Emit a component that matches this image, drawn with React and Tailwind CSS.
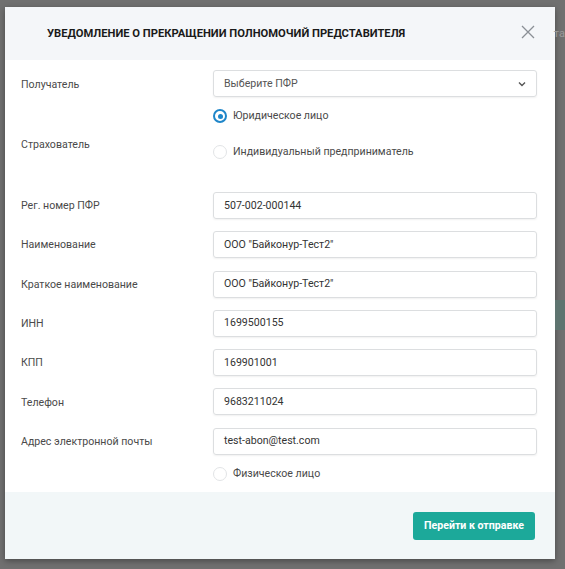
import React from "react";

const fields = [
  ["Рег. номер ПФР", "507-002-000144"],
  ["Наименование", "ООО \"Байконур-Тест2\""],
  ["Краткое наименование", "ООО \"Байконур-Тест2\""],
  ["ИНН", "1699500155"],
  ["КПП", "169901001"],
  ["Телефон", "9683211024"],
  ["Адрес электронной почты", "test-abon@test.com"],
];

function Radio({ checked, label }) {
  return (
    <div className="flex items-center h-[20px]">
      {checked ? (
        <span className="w-[14px] h-[14px] rounded-full border-[2.5px] border-[#1f86c9] flex items-center justify-center">
          <span className="w-[5px] h-[5px] rounded-full bg-[#1f86c9]" />
        </span>
      ) : (
        <span className="w-[14px] h-[14px] rounded-full border border-[#e2e4e6] bg-white" />
      )}
      <span className="ml-[6px] text-[10.6px] text-[#4a4a4a]">{label}</span>
    </div>
  );
}

export default function App() {
  return (
    <div
      className="w-[565px] h-[569px] bg-[#707070] relative overflow-hidden pt-[7px] pl-[5px]"
      style={{ fontFamily: "Roboto, 'Noto Sans', sans-serif" }}
    >
      <div className="absolute right-0 top-[26px] text-[11px] text-[#9a9a9a]">та</div>
      <div className="absolute right-0 top-[300px] w-[10px] h-[30px] bg-[#5e7470]" />
      <div className="w-[550px] h-[552px] bg-white flex flex-col shadow-[0_2px_6px_rgba(0,0,0,0.35)]">
        <div className="h-[53px] bg-[#f4f6f9] flex items-center pl-[42px] pr-[20px] shrink-0">
          <div className="flex-1 text-[11.2px] font-bold text-[#1a1a1a] pt-[1px]">
            УВЕДОМЛЕНИЕ О ПРЕКРАЩЕНИИ ПОЛНОМОЧИЙ ПРЕДСТАВИТЕЛЯ
          </div>
          <svg width="14" height="14" viewBox="0 0 14 14" className="mb-[4px]">
            <path d="M1 1L13 13M13 1L1 13" stroke="#8a8f96" strokeWidth="1.3" />
          </svg>
        </div>

        <div className="flex-1 pt-[10px] pl-[16px] pr-[18px] flex flex-col">
          <div className="flex items-center h-[27px]">
            <div className="w-[192px] text-[10.6px] text-[#4a4a4a] pt-[2px]">Получатель</div>
            <div className="flex-1 h-full border border-[#dcdee0] rounded-[3px] shadow-[0_1px_2px_rgba(0,0,0,0.06)] flex items-center pl-[10px] pr-[10px]">
              <span className="flex-1 text-[10.6px] text-[#555]">Выберите ПФР</span>
              <svg width="8" height="6" viewBox="0 0 8 6">
                <path d="M1 1.5L4 4.5L7 1.5" fill="none" stroke="#555" strokeWidth="1.4" />
              </svg>
            </div>
          </div>

          <div className="flex mt-[9px]">
            <div className="w-[192px] text-[10.6px] text-[#4a4a4a] pt-[31px]">Страхователь</div>
            <div className="flex flex-col gap-[16px]">
              <Radio checked label="Юридическое лицо" />
              <Radio label="Индивидуальный предприниматель" />
            </div>
          </div>

          <div className="flex flex-col gap-[12.3px] mt-[30px]">
            {fields.map(([l, v]) => (
              <div key={l} className="flex items-center h-[27px]">
                <div className="w-[192px] text-[10.6px] text-[#4a4a4a] pt-[1px]">{l}</div>
                <div className="flex-1 h-full border border-[#dcdee0] rounded-[3px] shadow-[0_1px_2px_rgba(0,0,0,0.06)] flex items-center pl-[10px]">
                  <span className="text-[10.6px] text-[#333]">{v}</span>
                </div>
              </div>
            ))}
          </div>

          <div className="mt-[9px] pl-[192px]">
            <Radio label="Физическое лицо" />
          </div>
        </div>

        <div className="h-[67px] bg-[#f2f7f8] flex items-center justify-end pr-[20px] shrink-0">
          <button className="w-[122px] h-[28px] rounded-[3px] bg-[#1ca99a] text-white text-[10.6px] font-bold">
            Перейти к отправке
          </button>
        </div>
      </div>
    </div>
  );
}
